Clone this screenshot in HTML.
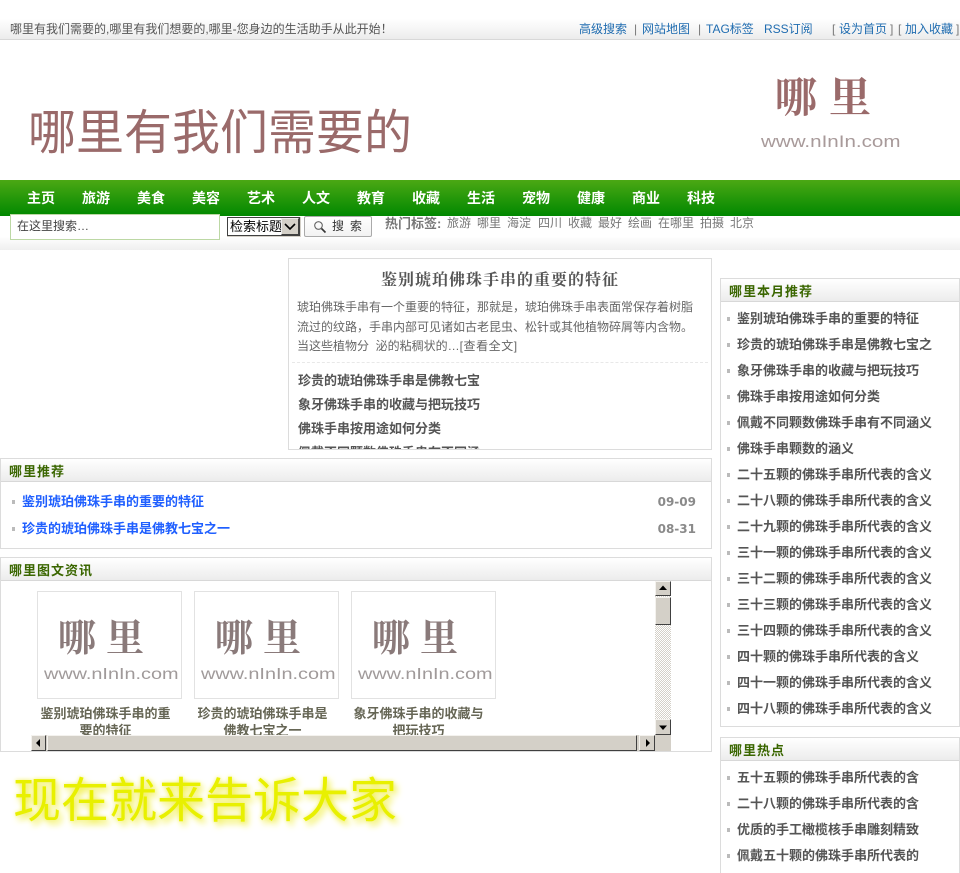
<!DOCTYPE html>
<html lang="zh"><head><meta charset="utf-8"><title>哪里</title>
<style>
*{box-sizing:border-box;margin:0;padding:0}
html,body{width:960px;height:873px;overflow:hidden;background:#fff}
body{position:relative;font:12px/1.2 "Liberation Sans","WenQuanYi Zen Hei","Noto Sans CJK SC",sans-serif;color:#555}
.a{position:absolute;white-space:nowrap}
.box{position:absolute;background:#fff;border:1px solid #dcdcdc;overflow:hidden}
.hd{position:absolute;left:0;right:0;top:0;height:23px;background:linear-gradient(#fff,#ececec);border-bottom:1px solid #d8d8d8;font-weight:bold;font-size:13px;letter-spacing:1px;color:#3a6600;padding:6px 0 0 8px;line-height:14px}
.li{position:absolute;font-size:13px;font-weight:bold;color:#555;white-space:nowrap;line-height:16px}
.li:before{content:"";position:absolute;left:-10px;top:6px;width:3px;height:4px;background:#bbb}
.blue{color:#1f5fff}
.nav{position:absolute;top:190px;font-size:14px;font-weight:bold;color:#fff;line-height:16px}
.top a{color:#1f6cb0;text-decoration:none}
.btn{position:absolute;background:#d4d0c8;border:1px solid;border-color:#f4f2ee #404040 #404040 #f4f2ee}
.cap{position:absolute;width:145px;padding:0 2px;text-align:center;font-size:13px;font-weight:bold;color:#666655;line-height:17px;white-space:normal}
.pic{position:absolute;width:145px;height:108px;top:10px;border:1px solid #e2e2e2;background:#fff;overflow:hidden}
.pic .u{left:6px;top:74px;font-size:16px;line-height:18px;color:#a09a9a;transform:scaleX(1.24);transform-origin:0 0}
.pic .l{left:20px;top:20px;font:bold 38px/46px 'Noto Serif CJK SC',serif;color:#8a7a7a;letter-spacing:10px}
</style></head><body>

<div class="a" style="left:0;top:0;width:960px;height:40px;background:linear-gradient(#fff 48%,#ececec);border-bottom:1px solid #d8d8d8"></div>
<div class="a" style="left:10px;top:22px;color:#555;line-height:14px">哪里有我们需要的,哪里有我们想要的,哪里-您身边的生活助手从此开始！</div>
<div class="a top" style="left:579px;top:22px;line-height:14px"><a href="#">高级搜索</a></div>
<div class="a" style="left:634px;top:22px;color:#777;line-height:14px">|</div>
<div class="a top" style="left:642px;top:22px;line-height:14px"><a href="#">网站地图</a></div>
<div class="a" style="left:698px;top:22px;color:#777;line-height:14px">|</div>
<div class="a top" style="left:706px;top:22px;line-height:14px"><a href="#">TAG标签</a></div>
<div class="a top" style="left:764px;top:22px;line-height:14px"><a href="#">RSS订阅</a></div>
<div class="a" style="left:832px;top:22px;color:#777;line-height:14px">[</div>
<div class="a top" style="left:839px;top:22px;line-height:14px"><a href="#">设为首页</a></div>
<div class="a" style="left:890px;top:22px;color:#777;line-height:14px">]</div>
<div class="a" style="left:898px;top:22px;color:#777;line-height:14px">[</div>
<div class="a top" style="left:905px;top:22px;line-height:14px"><a href="#">加入收藏</a></div>
<div class="a" style="left:956px;top:22px;color:#777;line-height:14px">]</div>

<div class="a" style="left:28px;top:100px;font-size:48px;line-height:56px;color:#9a6a6a;font-family:'WenQuanYi Zen Hei','Noto Sans CJK SC',sans-serif">哪里有我们需要的</div>
<div class="a" style="left:775px;top:70px;font-size:42px;line-height:50px;color:#9a6a6a;letter-spacing:12px;font-weight:bold;font-family:'Noto Serif CJK SC',serif">哪里</div>
<div class="a" style="left:761px;top:132px;font-size:17px;line-height:20px;color:#a89a9a;transform:scaleX(1.21);transform-origin:0 0">www.nInIn.com</div>

<div class="a" style="left:0;top:180px;width:960px;height:36px;background:linear-gradient(#4ba814,#008800)"></div>
<div class="nav" style="left:27px">主页</div><div class="nav" style="left:82px">旅游</div><div class="nav" style="left:137px">美食</div><div class="nav" style="left:192px">美容</div><div class="nav" style="left:247px">艺术</div><div class="nav" style="left:302px">人文</div><div class="nav" style="left:357px">教育</div><div class="nav" style="left:412px">收藏</div><div class="nav" style="left:467px">生活</div><div class="nav" style="left:522px">宠物</div><div class="nav" style="left:577px">健康</div><div class="nav" style="left:632px">商业</div><div class="nav" style="left:687px">科技</div>

<div class="a" style="left:0;top:216px;width:960px;height:34px;background:linear-gradient(#fff 60%,#efefef)"></div>
<div class="a" style="left:10px;top:214px;width:210px;height:26px;background:#fff;border:1px solid #bcd8a4;padding:4px 0 0 6px;color:#444;line-height:15px">在这里搜索…</div>
<div class="a" style="left:227px;top:217px;width:74px;height:20px;background:#d4d0c8;padding:0 1px 1px 0">
  <div style="position:relative;width:73px;height:19px;background:#fff;border:1px solid #404040;color:#000;font-size:13px;line-height:18px;padding-left:2px;overflow:hidden">检索标题
    <div style="position:absolute;right:0;top:0;width:18px;height:17px;background:#d4d0c8;border:1px solid;border-color:#eee #404040 #404040 #eee"><svg width="16" height="15" style="position:absolute;left:0;top:0"><path d="M3 5l5 5 5-5" fill="none" stroke="#000" stroke-width="1.6"/></svg></div>
  </div>
</div>
<div class="a" style="left:304px;top:216px;width:68px;height:21px;background:linear-gradient(#fff,#f2f2f2);border:1px solid #aaa;border-radius:2px;color:#333;line-height:19px;padding-left:27px;word-spacing:2.7px">
  <svg width="14" height="14" style="position:absolute;left:8px;top:3px"><circle cx="5.5" cy="5.5" r="3.8" fill="none" stroke="#666" stroke-width="1.1"/><path d="M8.5 8.5l4 4" stroke="#333" stroke-width="1.6"/></svg>搜 索</div>
<div class="a" style="left:385px;top:216px;line-height:15px;font-weight:bold;color:#777;font-size:13px">热门标签:</div>
<div class="a" style="left:447px;top:216px;line-height:15px;color:#777">旅游</div>
<div class="a" style="left:477px;top:216px;line-height:15px;color:#777">哪里</div>
<div class="a" style="left:507px;top:216px;line-height:15px;color:#777">海淀</div>
<div class="a" style="left:538px;top:216px;line-height:15px;color:#777">四川</div>
<div class="a" style="left:568px;top:216px;line-height:15px;color:#777">收藏</div>
<div class="a" style="left:598px;top:216px;line-height:15px;color:#777">最好</div>
<div class="a" style="left:628px;top:216px;line-height:15px;color:#777">绘画</div>
<div class="a" style="left:658px;top:216px;line-height:15px;color:#777">在哪里</div>
<div class="a" style="left:700px;top:216px;line-height:15px;color:#777">拍摄</div>
<div class="a" style="left:730px;top:216px;line-height:15px;color:#777">北京</div>

<div class="box" style="left:288px;top:258px;width:424px;height:192px">
  <div class="a" style="left:0;width:422px;top:10px;text-align:center;font-size:16px;font-weight:bold;letter-spacing:1px;line-height:20px;color:#555;font-family:'Noto Serif CJK SC','Liberation Serif',serif">鉴别琥珀佛珠手串的重要的特征</div>
  <div class="a" style="left:8px;top:39px;line-height:19.5px;color:#666">琥珀佛珠手串有一个重要的特征，那就是，琥珀佛珠手串表面常保存着树脂<br>流过的纹路，手串内部可见诸如古老昆虫、松针或其他植物碎屑等内含物。<br>当这些植物分&nbsp;&nbsp;泌的粘稠状的…<span style="letter-spacing:.55px">[查看全文]</span></div>
  <div class="a" style="left:3px;width:416px;top:103px;border-top:1px dashed #e8e8e8"></div>
  <div class="a" style="left:9px;top:110px;font-size:13px;font-weight:bold;line-height:24px;color:#555">珍贵的琥珀佛珠手串是佛教七宝<br>象牙佛珠手串的收藏与把玩技巧<br>佛珠手串按用途如何分类<br>佩戴不同颗数佛珠手串有不同涵</div>
</div>

<div class="box" style="left:0;top:458px;width:712px;height:91px">
  <div class="hd">哪里推荐</div>
  <div class="li blue" style="left:21px;top:35px">鉴别琥珀佛珠手串的重要的特征</div>
  <div class="li blue" style="left:21px;top:62px">珍贵的琥珀佛珠手串是佛教七宝之一</div>
  <div class="a" style="right:15px;top:35px;font:bold 12px/16px 'DejaVu Sans',sans-serif;color:#8a8a8a">09-09</div>
  <div class="a" style="right:15px;top:62px;font:bold 12px/16px 'DejaVu Sans',sans-serif;color:#8a8a8a">08-31</div>
</div>

<div class="box" style="left:0;top:557px;width:712px;height:195px">
  <div class="hd">哪里图文资讯</div>
  <div class="a" style="left:30px;top:23px;width:640px;height:170px;overflow:hidden">
    <div class="a" style="left:0;top:0;width:624px;height:154px;overflow:hidden">
      <div class="pic" style="left:6px"><div class="a l">哪里</div><div class="a u">www.nInIn.com</div></div>
      <div class="pic" style="left:163px"><div class="a l">哪里</div><div class="a u">www.nInIn.com</div></div>
      <div class="pic" style="left:320px"><div class="a l">哪里</div><div class="a u">www.nInIn.com</div></div>
      <div class="cap" style="left:2px;top:124px">鉴别琥珀佛珠手串的重要的特征</div>
      <div class="cap" style="left:159px;top:124px">珍贵的琥珀佛珠手串是佛教七宝之一</div>
      <div class="cap" style="left:315px;top:124px">象牙佛珠手串的收藏与把玩技巧</div>
    </div>
    <!-- vertical scrollbar -->
    <div class="a" style="left:624px;top:0;width:16px;height:154px;background:repeating-conic-gradient(#d4d0c8 0 25%,#fff 0 50%) 0 0/2px 2px"></div>
    <div class="btn" style="left:624px;top:0;width:16px;height:15px"><svg width="14" height="13" style="position:absolute;left:0;top:0"><path d="M7 3.500L3 8h8z"/></svg></div>
    <div class="btn" style="left:624px;top:16px;width:16px;height:28px"></div>
    <div class="btn" style="left:624px;top:138px;width:16px;height:16px"><svg width="14" height="14" style="position:absolute;left:0;top:0"><path d="M7 10L3 5.500h8z"/></svg></div>
    <!-- horizontal scrollbar -->
    <div class="a" style="left:0;top:154px;width:640px;height:16px;background:#d4d0c8"></div>
    <div class="btn" style="left:0;top:154px;width:15px;height:16px"><svg width="13" height="14" style="position:absolute;left:0;top:0"><path d="M4 7l4-4v8z"/></svg></div>
    <div class="btn" style="left:16px;top:154px;width:590px;height:16px"></div>
    <div class="btn" style="left:608px;top:154px;width:16px;height:16px"><svg width="14" height="14" style="position:absolute;left:0;top:0"><path d="M10 7L6 3v8z"/></svg></div>
  </div>
</div>

<div class="a" style="left:13px;top:766px;font-size:48px;line-height:60px;color:#e8f000;text-shadow:3px 4px 7px #f0ee40,0 0 4px #f4f280;font-family:'WenQuanYi Zen Hei','Noto Sans CJK SC',sans-serif">现在就来告诉大家</div>

<div class="box" style="left:720px;top:278px;width:240px;height:449px">
  <div class="hd">哪里本月推荐</div>
  <div class="li" style="left:16px;top:32px">鉴别琥珀佛珠手串的重要的特征</div>
  <div class="li" style="left:16px;top:58px">珍贵的琥珀佛珠手串是佛教七宝之</div>
  <div class="li" style="left:16px;top:84px">象牙佛珠手串的收藏与把玩技巧</div>
  <div class="li" style="left:16px;top:110px">佛珠手串按用途如何分类</div>
  <div class="li" style="left:16px;top:136px">佩戴不同颗数佛珠手串有不同涵义</div>
  <div class="li" style="left:16px;top:162px">佛珠手串颗数的涵义</div>
  <div class="li" style="left:16px;top:188px">二十五颗的佛珠手串所代表的含义</div>
  <div class="li" style="left:16px;top:214px">二十八颗的佛珠手串所代表的含义</div>
  <div class="li" style="left:16px;top:240px">二十九颗的佛珠手串所代表的含义</div>
  <div class="li" style="left:16px;top:266px">三十一颗的佛珠手串所代表的含义</div>
  <div class="li" style="left:16px;top:292px">三十二颗的佛珠手串所代表的含义</div>
  <div class="li" style="left:16px;top:318px">三十三颗的佛珠手串所代表的含义</div>
  <div class="li" style="left:16px;top:344px">三十四颗的佛珠手串所代表的含义</div>
  <div class="li" style="left:16px;top:370px">四十颗的佛珠手串所代表的含义</div>
  <div class="li" style="left:16px;top:396px">四十一颗的佛珠手串所代表的含义</div>
  <div class="li" style="left:16px;top:422px">四十八颗的佛珠手串所代表的含义</div>
</div>

<div class="box" style="left:720px;top:737px;width:240px;height:150px">
  <div class="hd">哪里热点</div>
  <div class="li" style="left:16px;top:32px">五十五颗的佛珠手串所代表的含</div>
  <div class="li" style="left:16px;top:58px">二十八颗的佛珠手串所代表的含</div>
  <div class="li" style="left:16px;top:84px">优质的手工橄榄核手串雕刻精致</div>
  <div class="li" style="left:16px;top:110px">佩戴五十颗的佛珠手串所代表的</div>
</div>
</body></html>
